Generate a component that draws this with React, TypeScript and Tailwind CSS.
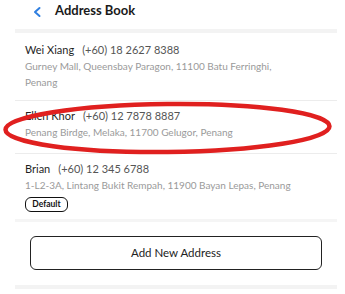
import React from "react";

export default function App() {
  return (
    <div
      className="relative w-[345px] h-[294px] bg-white overflow-hidden"
      style={{ fontFamily: "Lato, 'Open Sans', sans-serif" }}
    >
      {/* Header */}
      <div className="h-[29px] flex items-start">
        <div className="ml-[32px] mt-[6px] w-[10px] h-[12px]">
          <svg width="10" height="12" viewBox="0 0 10 12" fill="none">
            <path d="M7.5 2 L3 6 L7.5 10" stroke="#2f7fe0" strokeWidth="2" strokeLinecap="round" strokeLinejoin="round" />
          </svg>
        </div>
        <div className="ml-[13px] text-[13px] leading-[20px] font-bold text-[#1a1a1a]">Address Book</div>
      </div>

      <div className="ml-[15px] w-[322px]">
        <div className="h-[4px] bg-[#f3f3f3]" />

        {/* Entry 1 */}
        <div className="pl-[10px] pt-[9px] pb-[10px] border-b border-[#ececec]">
          <div className="flex gap-[8px] text-[11px] leading-[16px]">
            <span className="text-[#1f1f1f]">Wei Xiang</span>
            <span className="text-[#555]">(+60) 18 2627 8388</span>
          </div>
          <div className="text-[10px] leading-[16px] text-[#9a9a9a]">
            <div>Gurney Mall, Queensbay Paragon, 11100 Batu Ferringhi,</div>
            <div>Penang</div>
          </div>
        </div>

        {/* Entry 2 */}
        <div className="pl-[10px] pt-[7px] pb-[13px] border-b border-[#ececec]">
          <div className="flex gap-[8px] text-[11px] leading-[16px]">
            <span className="text-[#1f1f1f]">Ellen Khor</span>
            <span className="text-[#555]">(+60) 12 7878 8887</span>
          </div>
          <div className="text-[10px] leading-[16px] text-[#9a9a9a]">
            Penang Birdge, Melaka, 11700 Gelugor, Penang
          </div>
        </div>

        {/* Entry 3 */}
        <div className="pl-[10px] pt-[7px] pb-[7px]">
          <div className="flex gap-[8px] text-[11px] leading-[16px]">
            <span className="text-[#1f1f1f]">Brian</span>
            <span className="text-[#555]">(+60) 12 345 6788</span>
          </div>
          <div className="text-[10px] leading-[16px] text-[#9a9a9a]">
            1-L2-3A, Lintang Bukit Rempah, 11900 Bayan Lepas, Penang
          </div>
          <div className="mt-[4px] w-[43px] h-[15px] rounded-[6px] border-[1.5px] border-[#111] flex items-center justify-center text-[8.5px] font-bold leading-none text-[#111]">
            Default
          </div>
        </div>

        <div className="h-[3px] bg-[#f5f5f5]" />

        <div className="pt-[14px] pb-[15px] pl-[15px]">
          <div className="w-[292px] h-[34px] rounded-[6px] border-[1.5px] border-[#222] flex items-center justify-center text-[11.5px] text-[#222]">
            Add New Address
          </div>
        </div>

        <div className="h-[4px] bg-[#f3f3f3]" />
      </div>

      {/* Red annotation ellipse */}
      <svg
        className="absolute left-0 top-0 pointer-events-none"
        width="345"
        height="294"
        viewBox="0 0 345 294"
      >
        <ellipse
          cx="167.5"
          cy="128"
          rx="162"
          ry="24"
          fill="none"
          stroke="#e0201f"
          strokeWidth="4.5"
          transform="rotate(-0.6 167.5 128)"
        />
      </svg>
    </div>
  );
}
